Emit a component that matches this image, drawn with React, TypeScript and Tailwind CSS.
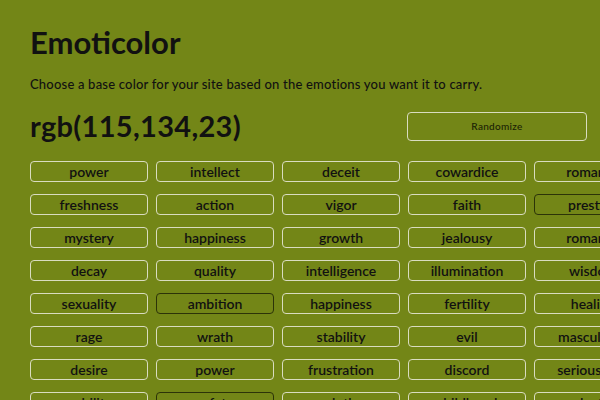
const rows: [string, boolean][][] = [
  [["power", false], ["intellect", false], ["deceit", false], ["cowardice", false], ["romance", false]],
  [["freshness", false], ["action", false], ["vigor", false], ["faith", false], ["prestige", true]],
  [["mystery", false], ["happiness", false], ["growth", false], ["jealousy", false], ["romance", false]],
  [["decay", false], ["quality", false], ["intelligence", false], ["illumination", false], ["wisdom", false]],
  [["sexuality", false], ["ambition", true], ["happiness", false], ["fertility", false], ["healing", false]],
  [["rage", false], ["wrath", false], ["stability", false], ["evil", false], ["masculinity", false]],
  [["desire", false], ["power", false], ["frustration", false], ["discord", false], ["seriousness", false]],
  [["nobility", false], ["safety", true], ["sloth", false], ["childhood", false], ["death", false]],
];

const App = () => {
  return (
    <div className="w-[600px] h-[400px] overflow-hidden bg-[#738617] text-[#111] font-['Lato',sans-serif]">
      <div className="pl-[30px] pt-[22px] w-[800px]">
        <h1 className="text-[31px] font-bold leading-[40px]">Emoticolor</h1>
        <p className="mt-[13px] text-[13px] leading-[18px] font-medium tracking-[0.2px]">
          Choose a base color for your site based on the emotions you want it to carry.
        </p>
        <div className="mt-[16px] flex items-center w-[557px] justify-between">
          <div className="text-[29px] font-bold leading-[34px] tracking-[0.3px]">rgb(115,134,23)</div>
          <button className="w-[180px] h-[29px] rounded-[4px] border border-[#d9dcc0] text-[10px] font-medium text-[#1a1f05] tracking-[0.3px]">
            Randomize
          </button>
        </div>
        <div className="mt-[18px] grid grid-cols-[repeat(5,118px)] gap-x-[8px] gap-y-[12px]">
          {rows.flat().map(([w, sel], i) => (
            <div
              key={i}
              className={
                sel
                  ? "h-[21px] rounded-[4px] border border-[#2c3308] flex items-center justify-center text-[14px] font-semibold leading-none"
                  : "h-[21px] rounded-[4px] border border-[#d9dcc0] flex items-center justify-center text-[14px] font-semibold leading-none"
              }
            >
              {w}
            </div>
          ))}
        </div>
      </div>
    </div>
  );
};

export default App;
